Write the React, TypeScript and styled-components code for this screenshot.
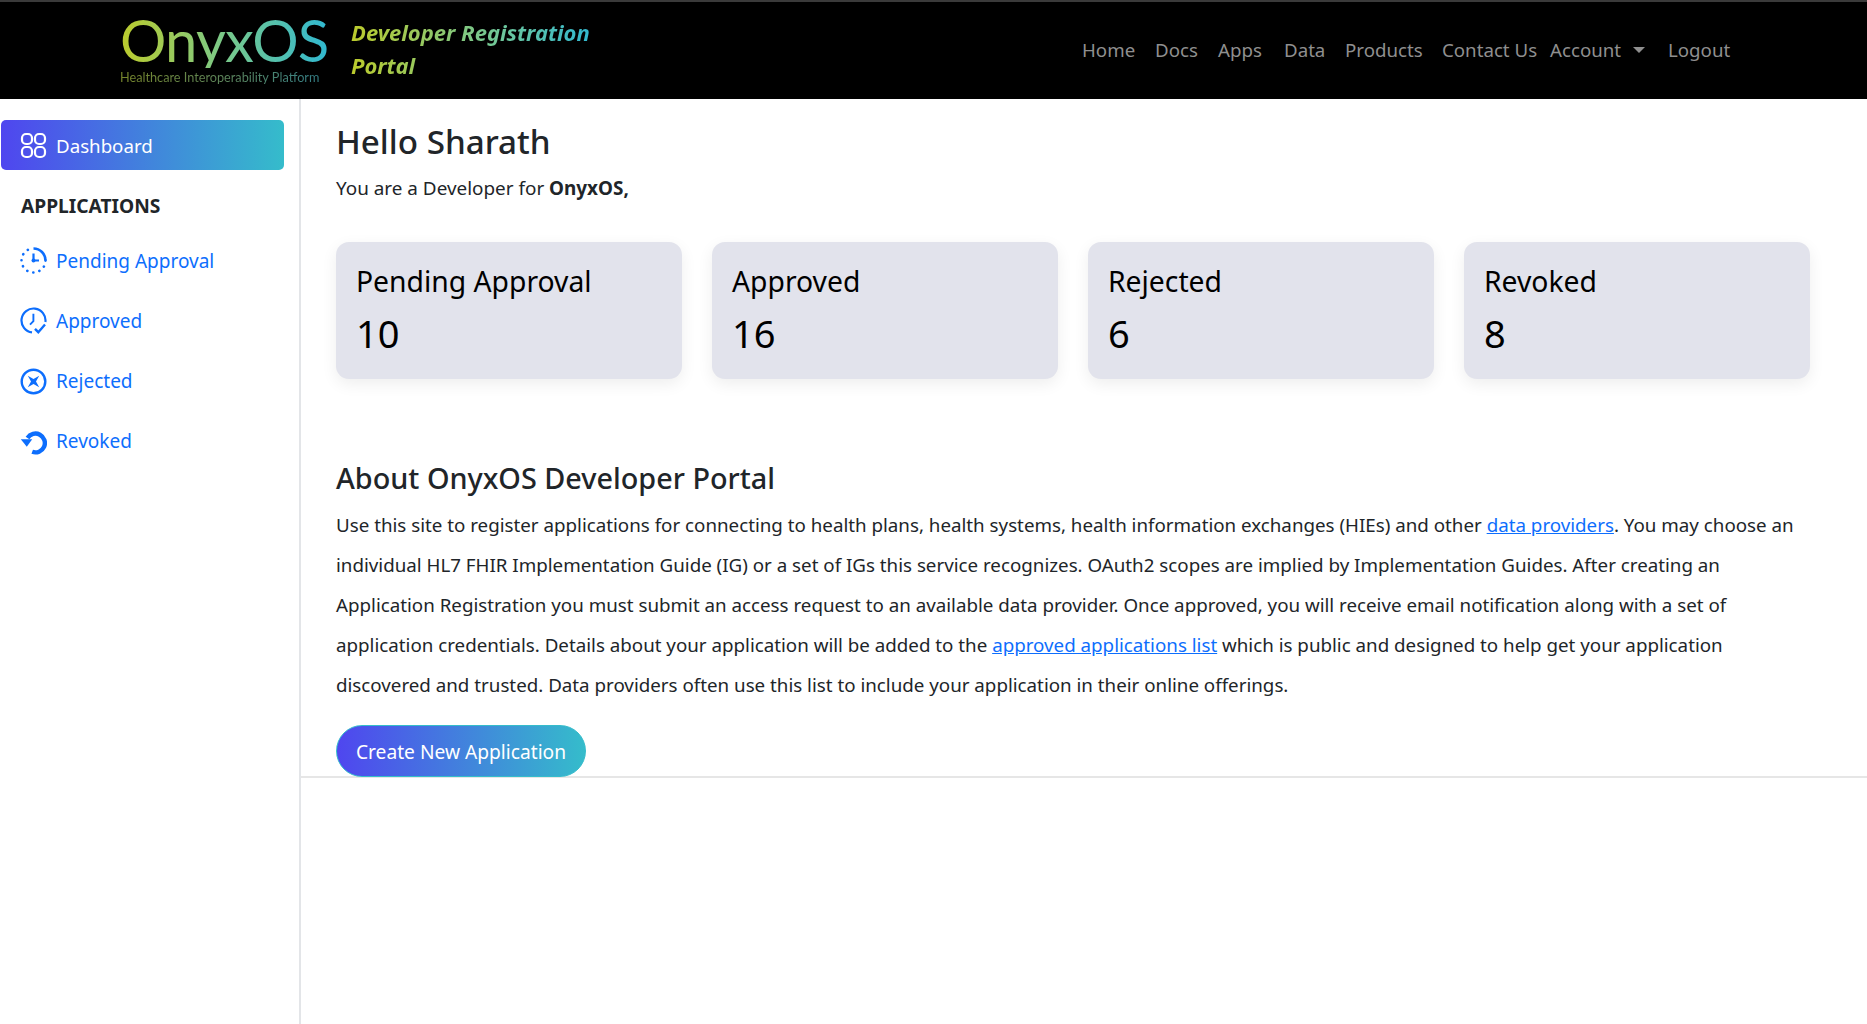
import React from "react";
import styled, { createGlobalStyle } from "styled-components";

const GRADIENT = "linear-gradient(90deg, #4f46ef 0%, #35bccb 100%)";
const TEXT_GRADIENT = "linear-gradient(90deg, #bccb2c 0%, #79c98a 50%, #2fb8d2 100%)";

const GlobalStyle = createGlobalStyle`
  html, body {
    margin: 0;
    padding: 0;
    background: #fff;
    font-family: "Noto Sans", "Open Sans", sans-serif;
    color: #212529;
  }
  * { box-sizing: border-box; }
`;

const Page = styled.div`
  display: flex;
  flex-flow: column;
  height: 1024px;
  overflow: hidden;
`;

const TopBar = styled.header`
  display: flex;
  align-items: center;
  height: 99px;
  flex: none;
  background: #000;
  border-top: 2px solid #3a3a3a;
  padding-left: 120px;
`;

const Logo = styled.div`
  display: flex;
  flex-flow: column;
  width: 210px;
  flex: none;
  margin-top: -6px;
  filter: blur(0.4px);
`;

const LogoName = styled.span`
  font-family: "Lato", sans-serif;
  font-weight: 400;
  font-size: 58px;
  line-height: 56px;
  letter-spacing: -0.8px;
  background: ${TEXT_GRADIENT};
  -webkit-background-clip: text;
  background-clip: text;
  color: transparent;
`;

const LogoTag = styled.span`
  font-family: "Lato", sans-serif;
  font-size: 12.7px;
  line-height: 14px;
  white-space: nowrap;
  background: linear-gradient(90deg, #77862a 0%, #5a8560 55%, #2f7f8c 100%);
  -webkit-background-clip: text;
  background-clip: text;
  color: transparent;
  margin-top: 2px;
`;

const PortalTitle = styled.div`
  width: 270px;
  margin: -4px 0 0 21px;
  font-size: 22px;
  line-height: 33px;
  font-weight: 700;
  font-style: italic;
  background: linear-gradient(90deg, #bccb2c 0%, #6fc79a 55%, #2fb8d2 90%);
  -webkit-background-clip: text;
  background-clip: text;
  color: transparent;
`;

const NavLinks = styled.nav`
  display: flex;
  align-items: center;
  margin: -2px 0 0 461px;
  font-size: 18.7px;
  color: #8f8f8f;
`;

const NavLink = styled.a<{ $w: number }>`
  display: flex;
  align-items: center;
  flex: none;
  width: ${(p) => p.$w}px;
  white-space: nowrap;
`;

const Caret = styled.span`
  width: 0;
  height: 0;
  margin-left: 12px;
  border-top: 6px solid #8f8f8f;
  border-left: 6px solid transparent;
  border-right: 6px solid transparent;
`;

const Body = styled.div`
  display: flex;
  flex: 1;
  min-height: 0;
`;

const Sidebar = styled.aside`
  width: 301px;
  flex: none;
  padding-top: 21px;
  border-right: 2px solid #e3e5e8;
`;

const DashboardButton = styled.a`
  display: flex;
  align-items: center;
  gap: 9px;
  width: 283px;
  height: 50px;
  margin-left: 1px;
  padding-left: 19px;
  border-radius: 5px;
  background: ${GRADIENT};
  color: #fff;
  font-size: 18.7px;
`;

const SectionTitle = styled.div`
  margin: 23px 0 0 21px;
  height: 26px;
  line-height: 26px;
  font-size: 19.2px;
  font-weight: 700;
  color: #212529;
`;

const SideList = styled.div`
  display: flex;
  flex-flow: column;
  margin-top: 12px;
`;

const SideItem = styled.a`
  display: flex;
  align-items: center;
  gap: 9px;
  height: 60px;
  padding-left: 20px;
  font-size: 19px;
  color: #0d6efd;
`;

const Icon = styled.svg<{ $up?: number }>`
  width: 27px;
  height: 27px;
  flex: none;
  margin-top: ${(p) => -(p.$up ?? 0) * 2}px;
`;

const Main = styled.main`
  flex: 1;
  min-width: 0;
`;

const Intro = styled.section`
  padding: 20px 0 0 35px;
  height: 679px;
  border-bottom: 2px solid #e6e6e6;
`;

const Greeting = styled.h1`
  margin: 0;
  font-size: 33.2px;
  line-height: 46px;
  font-weight: 500;
  color: #212529;
`;

const Subtitle = styled.p`
  margin: 10px 0 0;
  font-size: 18.9px;
  line-height: 26px;
`;

const CardRow = styled.div`
  display: grid;
  grid-template-columns: repeat(4, 346px);
  gap: 30px;
  margin-top: 41px;
`;

const StatCard = styled.div`
  height: 137px;
  padding: 17px 20px;
  border-radius: 13px;
  background: #e2e3ec;
  box-shadow: 0 5px 16px rgba(0, 0, 0, 0.07);
  color: #000;
`;

const StatLabel = styled.div`
  font-size: 28.3px;
  line-height: 44px;
`;

const StatValue = styled.div`
  font-size: 38px;
  line-height: 54px;
  margin-top: 3px;
`;

const AboutTitle = styled.h2`
  margin: 79px 0 0;
  font-size: 28.8px;
  line-height: 40px;
  font-weight: 500;
`;

const AboutText = styled.p`
  margin: 7px 0 0;
  width: 1460px;
  font-size: 18.75px;
  line-height: 40px;
`;

const TextLink = styled.a`
  color: #0d6efd;
  text-decoration: underline;
`;

const CreateButton = styled.a`
  display: inline-flex;
  align-items: center;
  justify-content: center;
  width: 250px;
  height: 52px;
  margin-top: 20px;
  border: 1px solid #35bccb;
  border-radius: 26px;
  background: ${GRADIENT};
  color: #fff;
  font-size: 19.2px;
`;

const GridIcon = () => (
  <Icon viewBox="0 0 27 27" fill="none" stroke="#fff" strokeWidth="2.2">
    <rect x="2" y="2" width="10" height="10" rx="4" />
    <rect x="15" y="2" width="10" height="10" rx="4" />
    <rect x="2" y="15" width="10" height="10" rx="4" />
    <rect x="15" y="15" width="10" height="10" rx="4" />
  </Icon>
);

const PendingIcon = () => (
  <Icon $up={1} viewBox="0 0 27 27" fill="none" stroke="currentColor">
    <path d="M13.5 1.5A12 12 0 0 1 25.5 13.5" strokeWidth="2.6" />
    <path
      d="M25.5 13.5A12 12 0 1 1 13.5 1.5"
      strokeWidth="2.6"
      strokeLinecap="round"
      strokeDasharray="0.1 6.18"
      strokeDashoffset="-6.28"
    />
    <path d="M13.5 6.5v7H19" strokeWidth="2.2" />
    <circle cx="13.5" cy="13.5" r="2" fill="currentColor" stroke="none" />
  </Icon>
);

const ApprovedIcon = () => (
  <Icon $up={0.5} viewBox="0 0 27 27" fill="none" stroke="currentColor" strokeWidth="2.2">
    <path d="M12 25.4A12 12 0 1 1 25.4 15" />
    <path d="M13.4 6.8v7.4l-3.4 3.4" strokeWidth="1.9" />
    <path d="M15 21.8l3.3 3.4 6.7-7.7" strokeWidth="2.4" />
  </Icon>
);

const RejectedIcon = () => (
  <Icon viewBox="0 0 27 27" fill="none" stroke="currentColor">
    <circle cx="13.5" cy="13.5" r="11.8" strokeWidth="2.4" />
    <path
      d="M7.8 7.8L13.5 11L19.2 7.8L16 13.5L19.2 19.2L13.5 16L7.8 19.2L11 13.5Z"
      fill="currentColor"
      stroke="none"
    />
  </Icon>
);

const RevokedIcon = () => (
  <Icon viewBox="0 0 27 27" fill="none" stroke="currentColor">
    <path d="M7.5 10A9.4 9.4 0 1 1 12.2 23.8" strokeWidth="4.4" />
    <path d="M0.8 11.2H12.2L6.8 18.8Z" fill="currentColor" stroke="none" />
  </Icon>
);

const stats = [
  { label: "Pending Approval", value: 10 },
  { label: "Approved", value: 16 },
  { label: "Rejected", value: 6 },
  { label: "Revoked", value: 8 },
];

const navItems = [
  { label: "Home", w: 73 },
  { label: "Docs", w: 63 },
  { label: "Apps", w: 66 },
  { label: "Data", w: 61 },
  { label: "Products", w: 97 },
  { label: "Contact Us", w: 108 },
];

export default function App() {
  return (
    <Page>
      <GlobalStyle />
      <TopBar>
        <Logo>
          <LogoName>OnyxOS</LogoName>
          <LogoTag>Healthcare Interoperability Platform</LogoTag>
        </Logo>
        <PortalTitle>Developer Registration Portal</PortalTitle>
        <NavLinks>
          {navItems.map((item) => (
            <NavLink key={item.label} $w={item.w}>
              {item.label}
            </NavLink>
          ))}
          <NavLink $w={118}>
            Account
            <Caret />
          </NavLink>
          <NavLink $w={70}>Logout</NavLink>
        </NavLinks>
      </TopBar>
      <Body>
        <Sidebar>
          <DashboardButton>
            <GridIcon />
            Dashboard
          </DashboardButton>
          <SectionTitle>APPLICATIONS</SectionTitle>
          <SideList>
            <SideItem>
              <PendingIcon />
              Pending Approval
            </SideItem>
            <SideItem>
              <ApprovedIcon />
              Approved
            </SideItem>
            <SideItem>
              <RejectedIcon />
              Rejected
            </SideItem>
            <SideItem>
              <RevokedIcon />
              Revoked
            </SideItem>
          </SideList>
        </Sidebar>
        <Main>
          <Intro>
            <Greeting>Hello Sharath</Greeting>
            <Subtitle>
              You are a Developer for <b>OnyxOS,</b>
            </Subtitle>
            <CardRow>
              {stats.map((s) => (
                <StatCard key={s.label}>
                  <StatLabel>{s.label}</StatLabel>
                  <StatValue>{s.value}</StatValue>
                </StatCard>
              ))}
            </CardRow>
            <AboutTitle>About OnyxOS Developer Portal</AboutTitle>
            <AboutText>
              Use this site to register applications for connecting to health plans, health systems, health
              information exchanges (HIEs) and other <TextLink>data providers</TextLink>. You may choose an
              individual HL7 FHIR Implementation Guide (IG) or a set of IGs this service recognizes. OAuth2 scopes
              are implied by Implementation Guides. After creating an Application Registration you must submit an
              access request to an available data provider. Once approved, you will receive email notification
              along with a set of application credentials. Details about your application will be added to the{" "}
              <TextLink>approved applications list</TextLink> which is public and designed to help get your
              application discovered and trusted. Data providers often use this list to include your application in
              their online offerings.
            </AboutText>
            <CreateButton>Create New Application</CreateButton>
          </Intro>
        </Main>
      </Body>
    </Page>
  );
}
